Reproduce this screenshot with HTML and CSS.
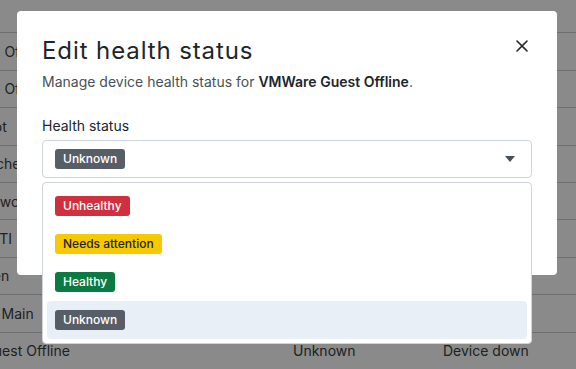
FILE: index.html
```html
<!DOCTYPE html>
<html lang="en">
<head>
    <meta charset="UTF-8">
    <meta name="viewport" content="width=device-width, initial-scale=1.0">
    <title>Devices</title>
    <link rel="stylesheet" href="styles.css">
</head>
<body>

    <!-- Device table behind the modal -->
    <div class="device-table">
        <div class="row"><span>Devices</span><span></span><span></span></div>
        <div class="row"><span>Conference Office</span><span>Healthy</span><span></span></div>
        <div class="row"><span>Conference Office 2</span><span>Healthy</span><span></span></div>
        <div class="row"><span>Lobby Robot</span><span>Unknown</span><span></span></div>
        <div class="row"><span>Hub A Switches</span><span>Healthy</span><span></span></div>
        <div class="row"><span>Visitors Network</span><span>Healthy</span><span></span></div>
        <div class="row"><span>Lab Printer TI</span><span>Healthy</span><span></span></div>
        <div class="row"><span>Main Kitchen</span><span>Healthy</span><span></span></div>
        <div class="row"><span>Warehouse Main</span><span>Healthy</span><span></span></div>
        <div class="row"><span>VMWare Guest Offline</span><span>Unknown</span><span>Device down</span></div>
    </div>

    <div class="backdrop"></div>

    <div class="modal">
        <div class="modal-header">
            <h2>Edit health status</h2>
            <button class="btn-close" aria-label="Close">
                <svg width="12" height="12" viewBox="0 0 12 12"><path d="M1 1 L11 11 M11 1 L1 11" stroke="#212529" stroke-width="1.6" stroke-linecap="round"/></svg>
            </button>
        </div>
        <p class="subtitle">Manage device health status for <strong>VMWare Guest Offline</strong>.</p>

        <label class="field-label">Health status</label>
        <div class="select-wrap">
            <div class="select">
                <span class="badge badge-unknown">Unknown</span>
                <svg class="caret" width="10" height="6" viewBox="0 0 10 6"><path d="M0 0 H10 L5 6 Z" fill="#495057"/></svg>
            </div>
            <ul class="dropdown">
                <li><span class="badge badge-unhealthy">Unhealthy</span></li>
                <li><span class="badge badge-attention">Needs attention</span></li>
                <li><span class="badge badge-healthy">Healthy</span></li>
                <li class="active"><span class="badge badge-unknown">Unknown</span></li>
            </ul>
        </div>
    </div>

</body>
</html>
```

FILE: styles.css
```css
body {
    margin: 0;
    font-family: Inter, "Noto Sans", sans-serif;
    color: #212529;
    background: white;
    overflow: hidden;
}

/* Table behind */
.device-table {
    margin-top: -4px;
    margin-left: -77px;
    font-size: 14px;
}
.device-table .row {
    display: grid;
    grid-template-columns: 370px 150px 1fr;
    align-items: center;
    height: 37.4px;
    box-sizing: border-box;
    border-bottom: 1px solid #c8ccd0;
    color: #3a3d40;
    white-space: nowrap;
}

.backdrop {
    position: fixed;
    inset: 0;
    background: rgba(0, 0, 0, 0.46);
}

/* Modal */
.modal {
    position: fixed;
    left: 17px;
    top: 11px;
    width: 540px;
    height: 264px;
    box-sizing: border-box;
    padding: 25px;
    background: white;
    border-radius: 4px;
}
.modal-header {
    display: flex;
    justify-content: space-between;
    align-items: flex-start;
}
.modal-header h2 {
    margin: 0;
    font-size: 24px;
    font-weight: 400;
    letter-spacing: 0.9px;
    line-height: 30px;
}
.btn-close {
    border: none;
    background: none;
    padding: 0;
    margin: 4px 4px 0 0;
    display: flex;
}
.subtitle {
    margin: 6px 0 24px;
    font-size: 14px;
    line-height: 20px;
    color: #495057;
}
.subtitle strong { color: #212529; font-weight: 600; }

.field-label {
    display: block;
    font-size: 14px;
    line-height: 20px;
    margin-bottom: 4px;
}

.select-wrap { position: relative; }
.select {
    display: flex;
    justify-content: space-between;
    align-items: center;
    height: 38px;
    box-sizing: border-box;
    padding: 0 16px 0 12px;
    border: 1px solid #ced4da;
    border-radius: 4px;
}

.dropdown {
    position: absolute;
    left: 0;
    right: 0;
    top: 42px;
    margin: 0;
    padding: 4px;
    list-style: none;
    background: white;
    border: 1px solid #ced4da;
    border-radius: 4px;
}
.dropdown li {
    display: flex;
    align-items: center;
    height: 38px;
    padding: 0 8px;
    border-radius: 4px;
}
.dropdown li.active { background: #e9eff7; }

.badge {
    display: inline-block;
    font-size: 12px;
    font-weight: 500;
    line-height: 20px;
    padding: 0 8px;
    border-radius: 3px;
    color: white;
}
.badge-unknown { background: #575e65; }
.badge-unhealthy { background: #d0303d; }
.badge-attention { background: #f8c800; color: #212529; }
.badge-healthy { background: #0b7a43; }
```
